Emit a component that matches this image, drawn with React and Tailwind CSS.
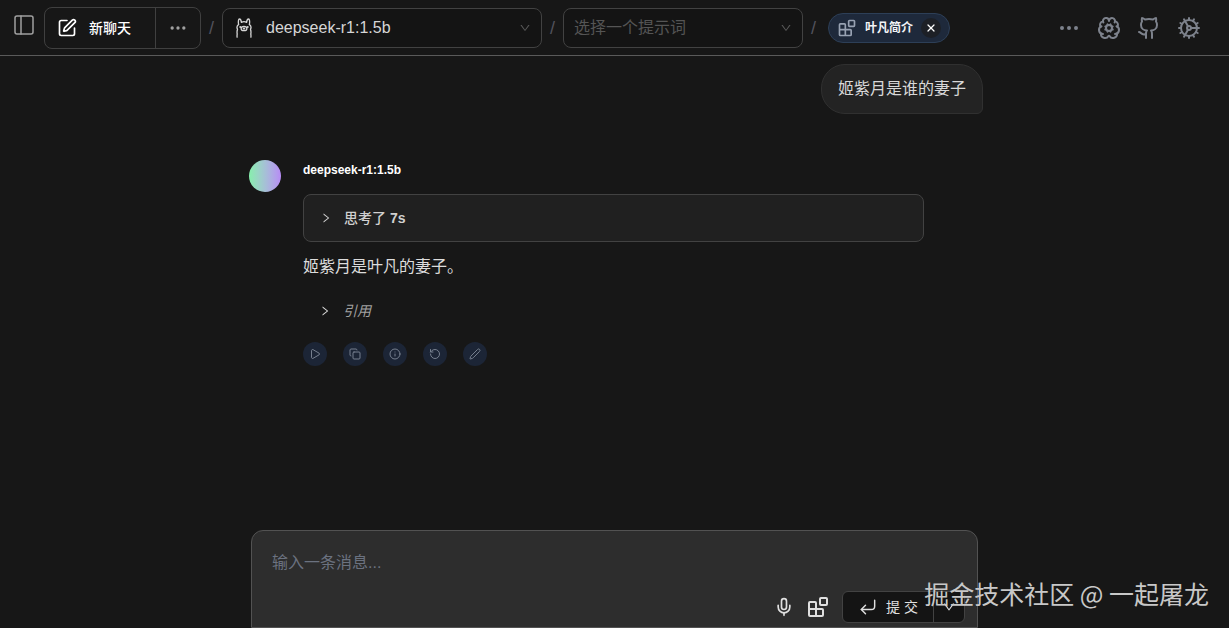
import { useState } from "react";
import {
  BrainCog,
  Cog,
  Copy,
  CornerDownLeft,
  Github,
  Info,
  Mic,
  MoreHorizontal,
  PanelLeft,
  Pen,
  Play,
  RotateCcw,
  SquarePen,
  X,
} from "lucide-react";
import { AiOutlineDown, AiOutlineRight } from "react-icons/ai";

const messageActions = [
  { label: "播放", icon: Play },
  { label: "复制", icon: Copy },
  { label: "信息", icon: Info },
  { label: "重新生成", icon: RotateCcw },
  { label: "编辑", icon: Pen },
];

function LlamaIcon({ className }) {
  return (
    <svg
      viewBox="0 0 16 20"
      className={className}
      fill="none"
      stroke="currentColor"
      strokeWidth="1.3"
      strokeLinecap="round"
      strokeLinejoin="round"
      aria-hidden="true"
    >
      <path d="M2.600 6.500C2.100 4 2.300 1 3.500 1c1.100 0 1.700 1.600 1.900 3.400 1.600-.9 3.600-.9 5.200 0C10.800 2.600 11.400 1 12.500 1c1.200 0 1.400 3 .9 5.500" />
      <path d="M2.600 6.500C1 7.600.7 9.600 1.500 11.300.9 13.200.9 14.600 1.200 16c-.2 1-.2 2-.1 3.200" />
      <path d="M13.400 6.500c1.600 1.100 1.900 3.100 1.100 4.800.6 1.900.6 3.300.3 4.700.2 1 .2 2 .1 3.200" />
      <ellipse cx="8" cy="10.500" rx="2.900" ry="2.200" />
      <path d="M7.300 10.100l.7.500.7-.5M8 10.600v.7" />
      <path d="M4.200 9h.1M11.700 9h.1" strokeWidth="1.800" />
    </svg>
  );
}

function BlocksIcon({ className }) {
  return (
    <svg
      viewBox="0 0 24 24"
      className={className}
      fill="none"
      stroke="currentColor"
      strokeWidth="2"
      strokeLinecap="round"
      strokeLinejoin="round"
      aria-hidden="true"
    >
      <rect width="7" height="7" x="14" y="3" rx="1" />
      <path d="M10 21V8a1 1 0 0 0-1-1H4a1 1 0 0 0-1 1v12a1 1 0 0 0 1 1h12a1 1 0 0 0 1-1v-5a1 1 0 0 0-1-1H3" />
    </svg>
  );
}

function Slash() {
  return <span className="w-[21px] text-center text-lg text-zinc-600">/</span>;
}

function Header() {
  const [showKnowledge, setShowKnowledge] = useState(true);

  return (
    <header className="flex h-14 shrink-0 items-center border-b border-[#5a5a5a] pr-7 pl-3">
      <button type="button" aria-label="侧边栏" className="mr-2 mb-1.5 text-[#a0a0a0]">
        <PanelLeft className="h-6 w-6" strokeWidth={1.5} />
      </button>

      <div className="flex h-[42px] w-[157px] rounded-lg border border-[#404040] text-white">
        <button type="button" className="flex flex-1 items-center gap-3 pl-3 text-sm font-medium">
          <SquarePen className="h-5 w-5" />
          新聊天
        </button>
        <button
          type="button"
          aria-label="更多"
          className="flex w-[45px] items-center justify-center border-l border-[#404040] text-[#a0a0a0]"
        >
          <MoreHorizontal className="h-5 w-5" />
        </button>
      </div>

      <Slash />
      <div className="relative w-80">
        <LlamaIcon className="pointer-events-none absolute top-2.5 left-3.5 h-5 w-4 text-[#d6d6d6]" />
        <select
          aria-label="模型"
          className="h-10 w-full appearance-none rounded-lg border border-[#424242] bg-[#141414] pr-8 pl-[43px] text-base text-[#d6d6d6]"
        >
          <option>deepseek-r1:1.5b</option>
        </select>
        <AiOutlineDown className="pointer-events-none absolute top-3.5 right-[11px] h-3 w-3 text-[#5a5a5a]" />
      </div>

      <Slash />
      <div className="relative w-60">
        <select
          aria-label="提示词"
          className="h-10 w-full appearance-none rounded-lg border border-[#424242] bg-[#141414] pr-8 pl-2.5 text-base text-[#555555]"
        >
          <option>选择一个提示词</option>
        </select>
        <AiOutlineDown className="pointer-events-none absolute top-3.5 right-[11px] h-3 w-3 text-[#5a5a5a]" />
      </div>

      <Slash />
      {showKnowledge && (
        <div className="ml-1 flex h-[30px] items-center rounded-full border border-[#2d3f57] bg-[#1e293b] pr-2 pl-2">
          <BlocksIcon className="h-5 w-5 text-[#98a2b3]" />
          <span className="ml-2 text-xs font-bold text-gray-100">叶凡简介</span>
          <button
            type="button"
            aria-label="移除"
            onClick={() => setShowKnowledge(false)}
            className="ml-2 flex h-5 w-5 items-center justify-center rounded-full bg-[#1d2026] text-white"
          >
            <X className="h-3 w-3" strokeWidth={2.5} />
          </button>
        </div>
      )}

      <div className="ml-auto flex items-center gap-4 text-[#7d828c]">
        <button type="button" aria-label="更多选项">
          <MoreHorizontal className="h-6 w-6" />
        </button>
        <a href="#models" aria-label="模型设置">
          <BrainCog className="h-6 w-6" />
        </a>
        <a href="#github" aria-label="GitHub">
          <Github className="h-6 w-6" />
        </a>
        <a href="#settings" aria-label="设置">
          <Cog className="h-6 w-6" />
        </a>
      </div>
    </header>
  );
}

function Messages() {
  return (
    <main className="mx-auto flex w-full max-w-[737px] flex-1 flex-col">
      <p className="mt-2 self-end rounded-3xl rounded-br-md border border-[#303030] bg-[#232323] px-4 py-3 text-base text-[#d8d8d8]">
        姬紫月是谁的妻子
      </p>

      <article className="mt-[46px] flex gap-[22px] pr-[59px] pl-[3px]">
        <div className="h-8 w-8 shrink-0 rounded-full bg-linear-to-r from-[#86efac] to-[#b78bf5]" />
        <div className="min-w-0 flex-1">
          <h2 className="h-[34px] pt-0.5 text-xs font-bold text-white">deepseek-r1:1.5b</h2>
          <button
            type="button"
            className="flex h-12 w-full items-center gap-3 rounded-lg border border-[#424242] bg-[#202020] px-4 text-sm font-medium text-[#d0d0d0]"
          >
            <AiOutlineRight className="h-3 w-3" />
            <span>
              思考了 <span className="font-bold">7s</span>
            </span>
          </button>
          <p className="mt-[13px] text-base text-[#dcdcdc]">姬紫月是叶凡的妻子。</p>
          <button type="button" className="mt-[22px] flex items-center gap-3 pl-4 text-sm text-[#a0a0a0] italic">
            <AiOutlineRight className="h-3 w-3 text-[#dcdcdc]" />
            引用
          </button>
          <div className="mt-[21px] flex gap-4">
            {messageActions.map(({ label, icon: Icon }) => (
              <button
                key={label}
                type="button"
                aria-label={label}
                className="flex h-6 w-6 items-center justify-center rounded-full bg-[#1c2536] text-[#77808f]"
              >
                <Icon className="h-3 w-3" />
              </button>
            ))}
          </div>
        </div>
      </article>
    </main>
  );
}

function Composer() {
  const [message, setMessage] = useState("");

  return (
    <form
      onSubmit={(e) => e.preventDefault()}
      className="mx-auto w-full max-w-[727px] rounded-t-xl border border-[#525252] bg-[#2d2d2d] px-3 pt-3 pb-1"
    >
      <textarea
        aria-label="消息"
        rows={1}
        value={message}
        onChange={(e) => setMessage(e.target.value)}
        placeholder="输入一条消息..."
        className="block h-12 w-full resize-none px-2 py-2 text-base text-gray-100 outline-none placeholder:text-[#6b7280]"
      />
      <div className="flex items-center justify-end text-[#e0e0e0]">
        <button type="button" aria-label="语音输入" className="mr-3">
          <Mic className="h-5 w-5" />
        </button>
        <button type="button" aria-label="知识库" className="mr-3">
          <BlocksIcon className="h-6 w-6" />
        </button>
        <div className="flex h-8 rounded-md border border-[#424242] bg-[#141414]">
          <button type="submit" className="flex w-[90px] items-center justify-center gap-2 text-sm">
            <CornerDownLeft className="h-5 w-5" strokeWidth={1.75} />
            提 交
          </button>
          <button
            type="button"
            aria-label="提交选项"
            className="flex w-[31px] items-center justify-center border-l border-[#424242]"
          >
            <AiOutlineDown className="h-3.5 w-3.5" />
          </button>
        </div>
      </div>
    </form>
  );
}

export default function App() {
  return (
    <div className="relative flex min-h-screen flex-col bg-[#171717] font-['Liberation_Sans','Noto_Sans_CJK_SC',sans-serif]">
      <Header />
      <Messages />
      <Composer />
      <p className="pointer-events-none absolute right-5 bottom-4 font-['Noto_Sans_CJK_SC',sans-serif] text-[25px] text-[#c8c8c8]">
        掘金技术社区 @ 一起屠龙
      </p>
    </div>
  );
}
